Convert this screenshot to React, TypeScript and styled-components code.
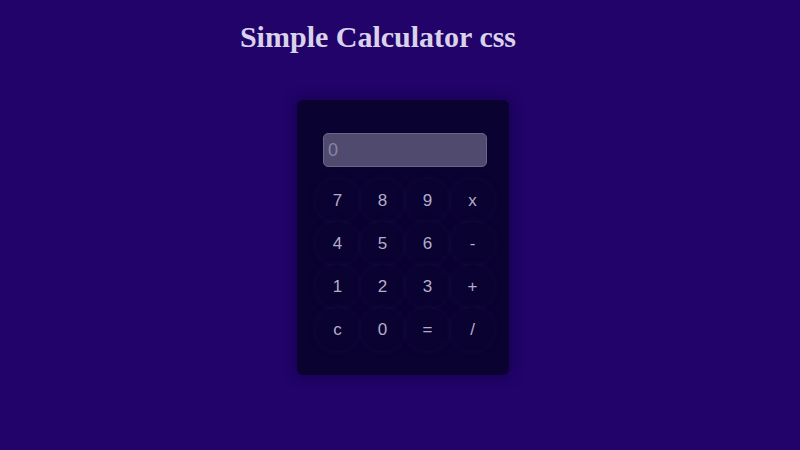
import React, { useState } from "react";
import styled, { createGlobalStyle } from "styled-components";

const GlobalStyle = createGlobalStyle`
  html, body {
    margin: 0;
    padding: 0;
    background: #21036a;
    height: 100%;
  }
`;

const Page = styled.div`
  width: 800px;
  height: 450px;
  display: flex;
  flex-direction: column;
  align-items: center;
  background: #21036a;
`;

const Title = styled.h1`
  width: 756px;
  margin: 19px 44px 0 0;
  text-align: center;
  font-family: "Liberation Serif", serif;
  font-weight: bold;
  font-size: 30px;
  line-height: 36px;
  color: #d9d2ea;
`;

const Card = styled.div`
  margin: 45px 0 0 5px;
  width: 212px;
  box-sizing: border-box;
  padding: 33px 0 24px 5px;
  background: #0a0230;
  border-radius: 6px;
  box-shadow: 0 0 14px rgba(10, 2, 40, 0.55);
  display: flex;
  flex-direction: column;
  align-items: center;
`;

const Display = styled.input`
  width: 164px;
  height: 34px;
  box-sizing: border-box;
  border: 1px solid #6a6588;
  border-radius: 5px;
  background: #4f4a6e;
  padding: 0 4px;
  font-family: "Liberation Sans", Arial, sans-serif;
  font-size: 18px;
  color: #d0cae0;
  outline: none;
  &::placeholder {
    color: #8a85a2;
  }
`;

const Pad = styled.div`
  margin-top: 12px;
  display: grid;
  grid-template-columns: repeat(4, 43px);
  grid-auto-rows: 43px;
  column-gap: 2px;
`;

const Key = styled.button`
  width: 43px;
  height: 43px;
  border-radius: 50%;
  border: none;
  background: #0a0230;
  box-shadow: 0 0 9px rgba(60, 40, 120, 0.22);
  font-family: "Liberation Sans", Arial, sans-serif;
  font-size: 17px;
  color: #b4adc9;
  cursor: pointer;
  padding: 0;
`;

const keys = ["7", "8", "9", "x", "4", "5", "6", "-", "1", "2", "3", "+", "c", "0", "=", "/"];

export default function App() {
  const [value, setValue] = useState("");

  const press = (k: string) => {
    if (k === "c") return setValue("");
    if (k === "=") {
      try {
        const expr = value.replace(/x/g, "*");
        // eslint-disable-next-line no-new-func
        const r = Function(`return (${expr})`)();
        setValue(String(r));
      } catch {
        setValue("");
      }
      return;
    }
    setValue(value + k);
  };

  return (
    <Page>
      <GlobalStyle />
      <Title>Simple Calculator css</Title>
      <Card>
        <Display placeholder="0" value={value} readOnly />
        <Pad>
          {keys.map((k) => (
            <Key key={k} onClick={() => press(k)}>
              {k}
            </Key>
          ))}
        </Pad>
      </Card>
    </Page>
  );
}
